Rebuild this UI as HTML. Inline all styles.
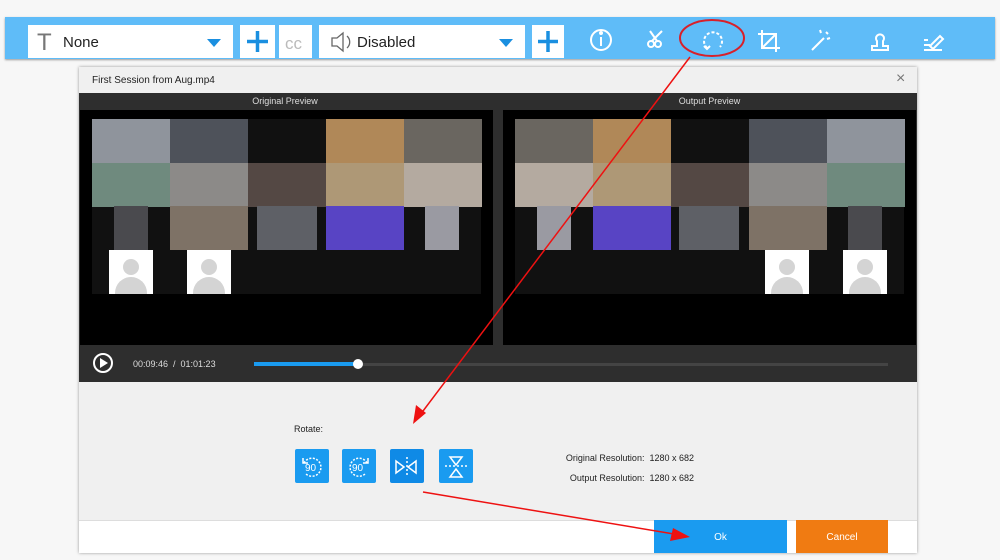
<!DOCTYPE html>
<html><head><style>
*{margin:0;padding:0;box-sizing:border-box}
body{width:1000px;height:560px;background:#f7f7f7;position:relative;overflow:hidden;font-family:"Liberation Sans",sans-serif}
.a{position:absolute}
.tb{left:5px;top:17px;width:990px;height:42px;background:#5fbcf8;box-shadow:0 1px 2px #999}
.w{background:#fff}
.c{position:absolute;width:78px;height:44px}
.ph{position:absolute;width:44px;height:44px;background:#fff}
.ph:before{content:"";position:absolute;left:14px;top:9px;width:16px;height:16px;border-radius:50%;background:#d4d4d4}
.ph:after{content:"";position:absolute;left:6px;top:27px;width:32px;height:17px;border-radius:16px 16px 0 0;background:#d4d4d4}
.rb{position:absolute;top:449px;width:34px;height:34px;background:#1a9bf0;border-radius:2px}
</style></head><body>
<div class="a tb"></div>
<div class="a w" style="left:28px;top:25px;width:205px;height:33px"></div>
<div class="a" style="left:37px;top:29px;font-size:24px;color:#777;font-weight:300">T</div>
<div class="a" style="left:63px;top:34px;font-size:15px;color:#222">None</div>
<div class="a" style="left:207px;top:39px;border:7px solid transparent;border-top:8px solid #1a8fe0;border-bottom:0"></div>
<div class="a w" style="left:240px;top:25px;width:35px;height:33px"></div>
<svg class="a" style="left:240px;top:25px" width="35" height="33"><path d="M17.5 6v21M7 16.5h21" stroke="#1a8fe0" stroke-width="3.5"/></svg>
<div class="a w" style="left:279px;top:25px;width:33px;height:33px"></div>
<div class="a" style="left:285px;top:34px;font-size:17px;color:#bbb">cc</div>
<div class="a w" style="left:319px;top:25px;width:206px;height:33px"></div>
<svg class="a" style="left:329px;top:30px" width="26" height="24" fill="none" stroke="#666" stroke-width="1.3"><path d="M3 8h5l6-5v18l-6-5H3z"/><path d="M18 6a8 8 0 0 1 0 12"/></svg>
<div class="a" style="left:357px;top:34px;font-size:15px;color:#222">Disabled</div>
<div class="a" style="left:499px;top:39px;border:7px solid transparent;border-top:8px solid #1a8fe0;border-bottom:0"></div>
<div class="a w" style="left:532px;top:25px;width:32px;height:33px"></div>
<svg class="a" style="left:532px;top:25px" width="32" height="33"><path d="M16 6v21M6 16.5h20" stroke="#1a8fe0" stroke-width="3.5"/></svg>
<svg class="a" style="left:580px;top:20px" width="380" height="40" fill="none" stroke="#fff" stroke-width="2">
<circle cx="21" cy="20" r="10"/><line x1="21" y1="17" x2="21" y2="26"/><circle cx="21" cy="13" r="1" fill="#fff"/>
<circle cx="71" cy="24" r="3"/><circle cx="78" cy="24" r="3"/><line x1="72" y1="21" x2="82" y2="11"/><line x1="77" y1="21" x2="70" y2="11"/>
<path d="M127 28 A9 9 0 1 1 140 27" stroke-dasharray="3 2"/><path d="M124 26 l3 3 l3-3"/>
<path d="M182 10 v18 h18 M178 14 h18 v18 M182 28 l14-14"/>
<path d="M232 30 l12-12 M246 12 l2 2 M240 10 l1 3 M250 18 l-3 1" />
<path d="M292 30 h16 v-4 h-5 v-5 a4 4 0 1 0 -6 0 v5 h-5z"/>
<path d="M344 30 h18 M344 25 h6 M344 20 h4 M350 26 l10-10 l3 3 l-10 10z"/>
</svg>
<!-- dialog -->
<div class="a" style="left:79px;top:67px;width:838px;height:486px;background:#f0f0f0;box-shadow:0 0 3px #999"></div>
<div class="a" style="left:92px;top:75px;font-size:10px;color:#222">First Session from Aug.mp4</div>
<div class="a" style="left:896px;top:70px;font-size:16px;color:#777">×</div>
<div class="a" style="left:79px;top:93px;width:838px;height:289px;background:#2e2e2e"></div>
<div class="a" style="left:80px;top:96px;width:410px;text-align:center;font-size:9px;color:#ddd">Original Preview</div>
<div class="a" style="left:503px;top:96px;width:413px;text-align:center;font-size:9px;color:#ddd">Output Preview</div>
<div class="a" style="left:80px;top:110px;width:413px;height:235px;background:#000"></div>
<div class="a" style="left:503px;top:110px;width:413px;height:235px;background:#000"></div>
<div class="a" style="left:92px;top:119px;width:389px;height:175px;background:#111"></div>
<div class="c" style="left:92px;top:119px;background:#8f949c"></div>
<div class="c" style="left:170px;top:119px;background:#4e525a"></div>
<div class="c" style="left:326px;top:119px;background:#b08858"></div>
<div class="c" style="left:404px;top:119px;background:#6a6660"></div>
<div class="c" style="left:92px;top:163px;background:#6f8a7e"></div>
<div class="c" style="left:170px;top:163px;background:#8c8a88"></div>
<div class="c" style="left:248px;top:163px;background:#544844"></div>
<div class="c" style="left:326px;top:163px;background:#ae9876"></div>
<div class="c" style="left:404px;top:163px;background:#b4aaa0"></div>
<div class="c" style="left:114px;top:206px;width:34px;background:#4a4a4e"></div>
<div class="c" style="left:170px;top:206px;background:#7e7266"></div>
<div class="c" style="left:257px;top:206px;width:60px;background:#5e6066"></div>
<div class="c" style="left:326px;top:206px;background:#5844c4"></div>
<div class="c" style="left:425px;top:206px;width:34px;background:#9a9aa2"></div>
<div class="ph" style="left:109px;top:250px"></div>
<div class="ph" style="left:187px;top:250px"></div>
<div class="a" style="left:515px;top:119px;width:389px;height:175px;background:#111"></div>
<div class="c" style="left:515px;top:119px;background:#6a6660"></div>
<div class="c" style="left:593px;top:119px;background:#b08858"></div>
<div class="c" style="left:749px;top:119px;background:#4e525a"></div>
<div class="c" style="left:827px;top:119px;background:#8f949c"></div>
<div class="c" style="left:515px;top:163px;background:#b4aaa0"></div>
<div class="c" style="left:593px;top:163px;background:#ae9876"></div>
<div class="c" style="left:671px;top:163px;background:#544844"></div>
<div class="c" style="left:749px;top:163px;background:#8c8a88"></div>
<div class="c" style="left:827px;top:163px;background:#6f8a7e"></div>
<div class="c" style="left:537px;top:206px;width:34px;background:#9a9aa2"></div>
<div class="c" style="left:593px;top:206px;background:#5844c4"></div>
<div class="c" style="left:679px;top:206px;width:60px;background:#5e6066"></div>
<div class="c" style="left:749px;top:206px;background:#7e7266"></div>
<div class="c" style="left:848px;top:206px;width:34px;background:#4a4a4e"></div>
<div class="ph" style="left:765px;top:250px"></div>
<div class="ph" style="left:843px;top:250px"></div>
<svg class="a" style="left:92px;top:352px" width="24" height="24"><circle cx="11" cy="11" r="9" fill="none" stroke="#fff" stroke-width="2"/><path d="M8 6 L16 11 L8 16z" fill="#fff"/></svg>
<div class="a" style="left:133px;top:359px;font-size:9px;color:#ddd">00:09:46 &nbsp;/ &nbsp;01:01:23</div>
<div class="a" style="left:254px;top:363px;width:634px;height:3px;background:#444"></div>
<div class="a" style="left:254px;top:362px;width:104px;height:4px;background:#1a9bf0"></div>
<div class="a" style="left:353px;top:359px;width:10px;height:10px;border-radius:50%;background:#fff"></div>
<div class="a" style="left:294px;top:424px;font-size:9px;color:#222">Rotate:</div>
<div class="rb" style="left:295px"></div><div class="rb" style="left:342px"></div><div class="rb" style="left:390px;background:#0f8ae6"></div><div class="rb" style="left:439px"></div>
<svg class="a" style="left:295px;top:449px" width="180" height="34" fill="none" stroke="#fff" stroke-width="1.5">
<path d="M9 14 A9 9 0 1 1 10 24" stroke-dasharray="2 1.5"/><path d="M8 9 v5 h5"/><text x="10" y="22" font-size="10" fill="#fff" stroke="none" font-family="Liberation Sans">90</text>
<path d="M72 14 A9 9 0 1 0 71 24" stroke-dasharray="2 1.5"/><path d="M73 9 v5 h-5"/><text x="57" y="22" font-size="10" fill="#fff" stroke="none" font-family="Liberation Sans">90</text>
<path d="M101 12 v12 l8-6z M121 12 v12 l-8-6z"/><path d="M112 8 v20" stroke-dasharray="2 2"/>
<path d="M155 8 h12 l-6 8z M155 28 h12 l-6 -8z"/><path d="M150 17 h22" stroke-dasharray="2 2"/>
</svg>
<div class="a" style="left:540px;top:448px;width:154px;font-size:9px;color:#222;text-align:right;line-height:20px">Original Resolution: &nbsp;1280 x 682<br>Output Resolution: &nbsp;1280 x 682</div>
<div class="a" style="left:79px;top:520px;width:838px;height:33px;background:#fff;border-top:1px solid #ddd"></div>
<div class="a" style="left:654px;top:520px;width:133px;height:33px;background:#1a9bf0;color:#fff;font-size:10px;text-align:center;line-height:35px">Ok</div>
<div class="a" style="left:796px;top:520px;width:92px;height:33px;background:#f07b12;color:#fff;font-size:10px;text-align:center;line-height:35px">Cancel</div>
<svg class="a" style="left:0;top:0" width="1000" height="560">
<ellipse cx="712" cy="38" rx="32" ry="18" fill="none" stroke="#d8202a" stroke-width="2"/>
<line x1="690" y1="57" x2="420" y2="415" stroke="#e11" stroke-width="1.5"/>
<path d="M413 424 L416 405 L426 413z" fill="#e11"/>
<line x1="423" y1="492" x2="680" y2="535" stroke="#e11" stroke-width="1.5"/>
<path d="M690 537 L670 541 L673 528z" fill="#e11"/>
</svg>
</body></html>
